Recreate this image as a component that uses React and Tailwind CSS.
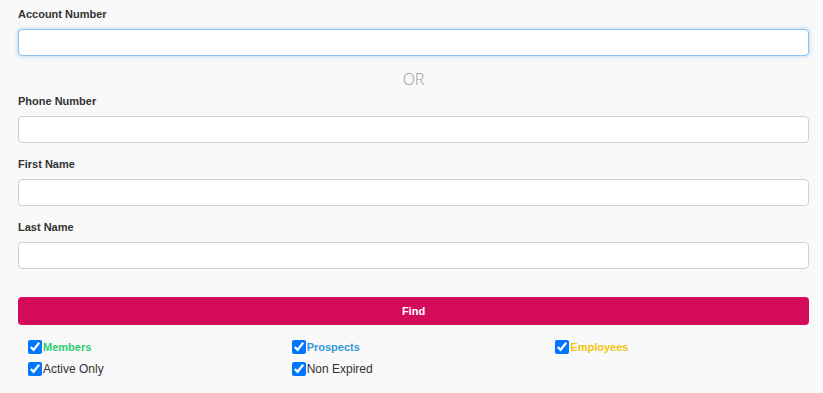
import React from "react";

const labelCls = "block text-[11px] leading-[13px] font-bold text-[#333] mb-[8px]";
const inputCls =
  "block w-full h-[27px] bg-white border border-[#cfcfcf] rounded-[4px] px-2 text-[12px] outline-none";

function Field({ label, focused, className = "" }) {
  return (
    <div className={className}>
      <label className={labelCls}>{label}</label>
      <input
        type="text"
        className={
          focused
            ? "block w-full h-[27px] bg-white border border-[#8cc3f2] rounded-[4px] px-2 text-[12px] outline-none shadow-[0_0_4px_rgba(102,175,233,0.55)]"
            : inputCls
        }
      />
    </div>
  );
}

function Check({ label, color, bold }) {
  return (
    <label className="flex items-center h-[22px] pl-[10px] cursor-pointer">
      <input type="checkbox" defaultChecked className="w-[14px] h-[14px] m-0 accent-[#0075ff]" />
      <span
        className={`ml-[1px] leading-[14px] ${bold ? "text-[11px] font-bold" : "text-[12px] font-normal"}`}
        style={{ color }}
      >
        {label}
      </span>
    </label>
  );
}

export default function App() {
  return (
    <div
      className="min-h-[393px] bg-[#f9f9f9] pl-[18px] pr-[14px] pt-[8px]"
      style={{ fontFamily: '"Liberation Sans", Arial, sans-serif' }}
    >
      <Field label="Account Number" focused />

      <div
        className="text-center text-[16px] leading-[20px] text-[#9a9a9a] font-light mt-[13px] mb-[6px]"
        style={{ fontFamily: '"Open Sans", sans-serif' }}
      >
        OR
      </div>

      <Field label="Phone Number" />
      <Field label="First Name" className="mt-[15px]" />
      <Field label="Last Name" className="mt-[15px]" />

      <button className="mt-[28px] w-full h-[28px] rounded-[4px] bg-[#d40b5a] text-white text-[11px] font-bold">
        Find
      </button>

      <div className="grid grid-cols-3 mt-[11px]">
        <Check label="Members" color="#2ecc71" bold />
        <Check label="Prospects" color="#3498db" bold />
        <Check label="Employees" color="#f1c40f" bold />
        <Check label="Active Only" color="#333" />
        <Check label="Non Expired" color="#333" />
      </div>
    </div>
  );
}
